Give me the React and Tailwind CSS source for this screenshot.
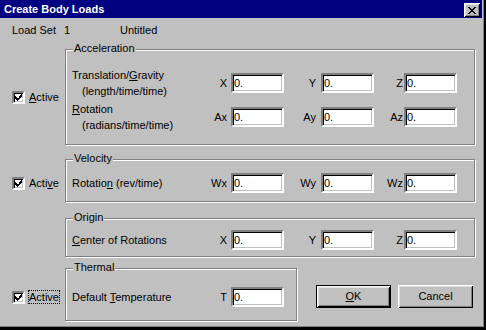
const raised = "shadow-[inset_1px_1px_0_#fff,inset_-1px_-1px_0_#000,inset_2px_2px_0_#dfdfdf,inset_-2px_-2px_0_#808080]";
const sunken = "border-2 border-t-[#808080] border-l-[#808080] border-r-white border-b-white shadow-[inset_1px_1px_0_#000,inset_-1px_-1px_0_#c0c0c0]";

function Pixels({ rows }) {
    return (
        <svg width={rows[0].length} height={rows.length} shapeRendering="crispEdges" className="block">
            {rows.flatMap((r, y) =>
                [...r].map((c, x) =>
                    c === '1' ? <rect key={`${x}-${y}`} x={x} y={y} width="1" height="1" fill="#000" /> : null
                )
            )}
        </svg>
    );
}

const closeX = ['11000011', '01100110', '00111100', '00011000', '00111100', '01100110', '11000011'];
const tick = ['0000001', '0000011', '1000111', '1100110', '1111100', '0111000', '0010000'];

function Box() {
    return (
        <div className={`${sunken} w-[13px] h-[13px] bg-white flex items-center justify-center`}>
            <Pixels rows={tick} />
        </div>
    );
}

function Check({ children }) {
    return (
        <div className="flex items-center gap-[4px] pl-[12px]">
            <Box />
            <span className="leading-[13px]">{children}</span>
        </div>
    );
}

function Field() {
    return <div className={`${sunken} w-[53px] h-[20px] bg-white pl-[1px] leading-[16px]`}>0.</div>;
}

function Group({ title, className, children }) {
    return (
        <div className={`border border-[#808080] shadow-[inset_1px_1px_0_#fff,1px_1px_0_#fff] ${className}`}>
            <div className="-mt-[8px] ml-[7px] w-fit px-[1px] bg-[#c0c0c0] leading-[13px]">{title}</div>
            {children}
        </div>
    );
}

const cols = "grid grid-cols-[134px_31px_53px_37px_53px_30px_53px] items-center";

export default function App() {
    return (
        <div className="w-[486px] h-[330px] bg-black font-['Liberation_Sans',Arial,sans-serif] text-[11px] text-black">
            <div className="w-[485px] h-[328px] bg-[#c0c0c0] border-r border-b border-black shadow-[inset_-1px_-1px_0_#808080] flex flex-col">
                {/* Title bar */}
                <div className="w-[482px] h-[18px] bg-[#000080] flex items-start justify-between pl-[4px] pr-[2px]">
                    <span className="text-white font-bold leading-[18px]">Create Body Loads</span>
                    <div className={`mt-[3px] w-[16px] h-[14px] bg-[#c0c0c0] ${raised} flex items-center justify-center`}>
                        <Pixels rows={closeX} />
                    </div>
                </div>

                {/* Load set */}
                <div className="mt-[6px] flex leading-[13px]">
                    <span className="ml-[12px] w-[52px]">Load Set</span>
                    <span className="w-[56px]">1</span>
                    <span>Untitled</span>
                </div>

                {/* Acceleration */}
                <div className="mt-[12px] flex items-center">
                    <div className="w-[65px]">
                        <Check><u>A</u>ctive</Check>
                    </div>
                    <Group title="Acceleration" className="w-[410px] h-[96px]">
                        <div className={`${cols} mt-[12px] gap-y-[2px]`}>
                            <div className="pl-[6px] leading-[16px]">
                                <div>Translation/<u>G</u>ravity</div>
                                <div className="pl-[10px]">(length/time/time)</div>
                            </div>
                            <div className="text-right pr-[4px]">X</div>
                            <Field />
                            <div className="text-right pr-[5px]">Y</div>
                            <Field />
                            <div className="text-right pr-[1px]">Z</div>
                            <Field />

                            <div className="pl-[6px] leading-[16px]">
                                <div><u>R</u>otation</div>
                                <div className="pl-[10px]">(radians/time/time)</div>
                            </div>
                            <div className="text-right pr-[4px]">Ax</div>
                            <Field />
                            <div className="text-right pr-[5px]">Ay</div>
                            <Field />
                            <div className="text-right pr-[1px]">Az</div>
                            <Field />
                        </div>
                    </Group>
                </div>

                {/* Velocity */}
                <div className="mt-[14px] flex items-start">
                    <div className="w-[65px] pt-[18px]">
                        <Check>Acti<u>v</u>e</Check>
                    </div>
                    <Group title="Velocity" className="w-[410px] h-[43px]">
                        <div className={`${cols} mt-[8px]`}>
                            <div className="pl-[6px]">Rotatio<u>n</u> (rev/time)</div>
                            <div className="text-right pr-[4px]">Wx</div>
                            <Field />
                            <div className="text-right pr-[5px]">Wy</div>
                            <Field />
                            <div className="text-right pr-[1px]">Wz</div>
                            <Field />
                        </div>
                    </Group>
                </div>

                {/* Origin */}
                <div className="mt-[16px] flex items-start">
                    <div className="w-[65px]" />
                    <Group title="Origin" className="w-[410px] h-[39px]">
                        <div className={`${cols} mt-[6px]`}>
                            <div className="pl-[6px]"><u>C</u>enter of Rotations</div>
                            <div className="text-right pr-[4px]">X</div>
                            <Field />
                            <div className="text-right pr-[5px]">Y</div>
                            <Field />
                            <div className="text-right pr-[1px]">Z</div>
                            <Field />
                        </div>
                    </Group>
                </div>

                {/* Thermal + buttons */}
                <div className="mt-[11px] flex items-start">
                    <div className="w-[65px] pt-[22px]">
                        <div className="flex items-center gap-[3px] pl-[12px]">
                            <Box />
                            <span className="leading-[12px] border border-dotted border-black">Active</span>
                        </div>
                    </div>
                    <Group title="Thermal" className="w-[232px] h-[53px]">
                        <div className="grid grid-cols-[134px_31px_53px] items-center mt-[13px]">
                            <div className="pl-[6px]">Default <u>T</u>emperature</div>
                            <div className="text-right pr-[4px]">T</div>
                            <Field />
                        </div>
                    </Group>
                    <div className="mt-[17px] ml-[19px] flex gap-[7px]">
                        <div className={`w-[75px] h-[23px] border border-black ${raised} flex items-center justify-center`}>
                            <span><u>O</u>K</span>
                        </div>
                        <div className={`w-[75px] h-[23px] ${raised} flex items-center justify-center`}>
                            <span>Cancel</span>
                        </div>
                    </div>
                </div>
            </div>
        </div>
    );
}
